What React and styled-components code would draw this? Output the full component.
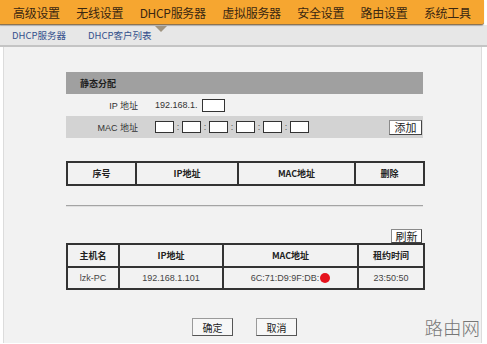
import React from 'react'
import styled, { createGlobalStyle } from 'styled-components'

const GlobalStyle = createGlobalStyle`
  html, body {
    margin: 0;
    padding: 0;
    background: #ffffff;
  }
  body {
    font-family: "Liberation Sans", "Noto Sans CJK SC", sans-serif;
  }
`

const menu = ['高级设置', '无线设置', 'DHCP服务器', '虚拟服务器', '安全设置', '路由设置', '系统工具']

const Page = styled.div`
  position: relative;
  width: 487px;
  height: 344px;
  overflow: hidden;
  background: #ffffff;
`

const TopNav = styled.div`
  position: relative;
  width: 484px;
  height: 25px;
  display: flex;
  align-items: center;
  gap: 16.5px;
  padding-left: 13px;
  box-sizing: border-box;
  background: #f6a630;
  border-bottom: 1px solid #8d7350;
  border-radius: 0 0 3px 0;
  box-shadow: 0 1px 1px rgba(0, 0, 0, 0.25);
  z-index: 2;
`

const MenuItem = styled.span`
  font-family: "Noto Sans CJK SC", sans-serif;
  font-size: 12px;
  line-height: 25px;
  color: #3a2710;
  letter-spacing: -0.3px;
  white-space: nowrap;
`

const Pointer = styled.div`
  position: absolute;
  left: 155px;
  top: 26px;
  width: 0;
  height: 0;
  border-left: 6px solid transparent;
  border-right: 6px solid transparent;
  border-top: 6px solid #a09480;
  z-index: 3;
`

const SubNav = styled.div`
  height: 20px;
  display: flex;
  align-items: center;
  gap: 22px;
  padding-left: 12px;
  background: #e7e7e7;
  border-bottom: 2px solid #c4c4c4;
`

const SubItem = styled.span`
  font-family: "Noto Sans CJK SC", sans-serif;
  font-size: 9.5px;
  color: #34508c;
  white-space: nowrap;
`

const Panel = styled.div`
  margin: 0 5px 0 3px;
  height: 296px;
  padding: 25px 0 0 62px;
  box-sizing: border-box;
  background: #f2f2f2;
  border-left: 1px solid #dcdcdc;
  border-right: 1px solid #dcdcdc;
`

const Content = styled.div`
  width: 357px;
  display: flex;
  flex-direction: column;
`

const SectionHeader = styled.div`
  height: 22px;
  display: flex;
  align-items: center;
  padding-left: 14px;
  background: #a0a0a0;
  font-family: "Noto Sans CJK SC", sans-serif;
  font-size: 9px;
  font-weight: 700;
  color: #1e1e1e;
`

const FormRow = styled.div`
  height: 22px;
  display: flex;
  align-items: center;
  background: ${p => (p.$shaded ? '#d3d3d3' : 'transparent')};
`

const Label = styled.div`
  width: 72px;
  margin-right: 17px;
  text-align: right;
  font-family: "Liberation Sans", "Noto Sans CJK SC", sans-serif;
  font-size: 9px;
  color: #333;
`

const Value = styled.span`
  font-size: 9px;
  color: #333;
  margin-right: 4px;
`

const Box = styled.div`
  width: ${p => p.$w}px;
  height: ${p => p.$h}px;
  box-sizing: border-box;
  background: #ffffff;
  border: 1px solid #333;
`

const Colon = styled.span`
  width: 8px;
  text-align: center;
  font-size: 9px;
  color: #555;
`

const Spacer = styled.div`
  flex: 1;
`

const SmallButton = styled.button`
  width: ${p => p.$w}px;
  height: ${p => p.$h}px;
  padding: 0;
  margin-right: 1px;
  box-sizing: border-box;
  background: #ffffff;
  border: 1px solid #8a8a8a;
  border-right-color: #444;
  border-bottom-color: #444;
  font-family: "Noto Sans CJK SC", sans-serif;
  font-size: 11px;
  line-height: 1;
  color: #222;
`

const Table = styled.table`
  width: 357px;
  border-collapse: collapse;
  table-layout: fixed;
  margin-top: ${p => p.$mt}px;
  background: #f2f2f2;
`

const Col = styled.col`
  width: ${p => p.$w}px;
`

const Th = styled.th`
  height: 21px;
  padding: 0;
  border: 2px solid #333;
  font-family: "Noto Sans CJK SC", sans-serif;
  font-size: 9px;
  font-weight: 700;
  color: #222;
  text-align: center;
`

const Td = styled.td`
  height: 20px;
  padding: 0;
  border: 2px solid #333;
  font-family: "Liberation Sans", "Noto Sans CJK SC", sans-serif;
  font-size: 9px;
  color: #444;
  text-align: center;
  white-space: nowrap;
`

const Dot = styled.span`
  display: inline-block;
  width: 10px;
  height: 10px;
  margin-left: 1px;
  border-radius: 50%;
  background: #e5121c;
  vertical-align: middle;
`

const Divider = styled.div`
  margin-top: 19px;
  height: 1px;
  background: #a4a4a4;
  border-bottom: 1px solid #e0e0e0;
`

const RefreshRow = styled.div`
  margin-top: 22px;
  display: flex;
  justify-content: flex-end;
`

const Actions = styled.div`
  margin-top: 28px;
  display: flex;
  justify-content: center;
  gap: 23px;
`

const ActionButton = styled.button`
  width: 41px;
  height: 18px;
  padding: 0;
  box-sizing: border-box;
  background: #f7f7f7;
  border: 1px solid #9a9a9a;
  border-right-color: #555;
  border-bottom-color: #555;
  font-family: "Noto Sans CJK SC", sans-serif;
  font-size: 10px;
  color: #222;
`

const Watermark = styled.div`
  position: absolute;
  right: 7px;
  bottom: 4px;
  font-family: "Noto Sans CJK SC", sans-serif;
  font-size: 18.5px;
  font-weight: 300;
  color: #777;
`

function App() {
  const macBoxes = [0, 1, 2, 3, 4, 5]

  return (
    <Page>
      <GlobalStyle />
      <TopNav>
        {menu.map(m => (
          <MenuItem key={m}>{m}</MenuItem>
        ))}
      </TopNav>
      <Pointer />
      <SubNav>
        <SubItem>DHCP服务器</SubItem>
        <SubItem>DHCP客户列表</SubItem>
      </SubNav>

      <Panel>
        <Content>
          <SectionHeader>静态分配</SectionHeader>
          <FormRow>
            <Label>IP 地址</Label>
            <Value>192.168.1.</Value>
            <Box $w={23} $h={13} />
          </FormRow>
          <FormRow $shaded>
            <Label>MAC 地址</Label>
            {macBoxes.map(i => (
              <React.Fragment key={i}>
                <Box $w={19} $h={12} />
                {i < 5 && <Colon>:</Colon>}
              </React.Fragment>
            ))}
            <Spacer />
            <SmallButton $w={33} $h={15}>添加</SmallButton>
          </FormRow>

          <Table $mt={23}>
            <colgroup>
              <Col $w={69} />
              <Col $w={102} />
              <Col $w={117} />
              <Col $w={69} />
            </colgroup>
            <thead>
              <tr>
                <Th>序号</Th>
                <Th>IP地址</Th>
                <Th>MAC地址</Th>
                <Th>删除</Th>
              </tr>
            </thead>
          </Table>

          <Divider />

          <RefreshRow>
            <SmallButton $w={31} $h={14}>刷新</SmallButton>
          </RefreshRow>

          <Table $mt={0}>
            <colgroup>
              <Col $w={52} />
              <Col $w={104} />
              <Col $w={135} />
              <Col $w={66} />
            </colgroup>
            <thead>
              <tr>
                <Th>主机名</Th>
                <Th>IP地址</Th>
                <Th>MAC地址</Th>
                <Th>租约时间</Th>
              </tr>
            </thead>
            <tbody>
              <tr>
                <Td>lzk-PC</Td>
                <Td>192.168.1.101</Td>
                <Td>
                  6C:71:D9:9F:DB:<Dot />
                </Td>
                <Td>23:50:50</Td>
              </tr>
            </tbody>
          </Table>

          <Actions>
            <ActionButton>确定</ActionButton>
            <ActionButton>取消</ActionButton>
          </Actions>
        </Content>
      </Panel>

      <Watermark>路由网</Watermark>
    </Page>
  )
}

export default App
